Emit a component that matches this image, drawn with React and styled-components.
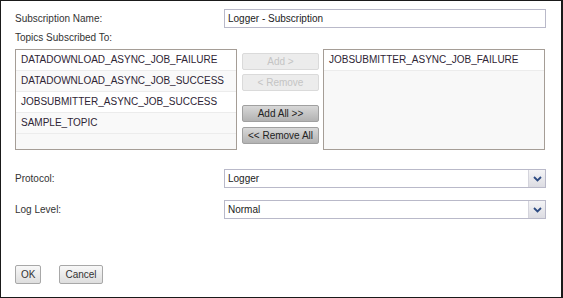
import React from 'react';
import styled, { createGlobalStyle } from 'styled-components';

const GlobalStyle = createGlobalStyle`
  html, body {
    margin: 0;
    padding: 0;
    background: #fff;
  }
  body {
    font-family: "Liberation Sans", Arial, sans-serif;
    font-size: 10px;
    color: #333;
  }
`;

const Frame = styled.div`
  box-sizing: border-box;
  width: 563px;
  height: 298px;
  border: 1px solid #1a1a1a;
  border-right-width: 2px;
  padding: 8px 0 0 14px;
  display: flex;
  flex-direction: column;
`;

const FieldRow = styled.div`
  display: flex;
  align-items: center;
  height: 19px;
  margin-top: ${props => props.$top || 0}px;
`;

const Label = styled.label`
  width: 209px;
  color: #333;
`;

const TextInput = styled.input`
  box-sizing: border-box;
  width: 322px;
  height: 19px;
  border: 1px solid #b9b9c9;
  padding: 0 3px;
  font: inherit;
  color: #222;
  outline: none;
`;

const SectionLabel = styled.div`
  margin-top: 4px;
  height: 12px;
  line-height: 12px;
`;

const Transfer = styled.div`
  display: flex;
  margin-top: 5px;
  height: 101px;
`;

const ListBox = styled.ul`
  box-sizing: border-box;
  width: 222px;
  height: 101px;
  margin: 0;
  padding: 0;
  list-style: none;
  border: 1px solid #a59d96;
  background: #f8f8f8;
  overflow: hidden;
`;

const ListItem = styled.li`
  height: 20px;
  line-height: 20px;
  padding-left: 5px;
  border-bottom: 1px solid #ececec;
  background: ${props => (props.$alt ? '#f9f9f9' : '#fff')};
  color: #2e2535;
  white-space: nowrap;
`;

const ButtonColumn = styled.div`
  width: 77px;
  margin: 0 4px 0 5px;
  padding-top: 4px;
  display: flex;
  flex-direction: column;
`;

const MoveButton = styled.button`
  box-sizing: border-box;
  width: 77px;
  height: 17px;
  padding: 0;
  margin-top: ${props => props.$gap || 0}px;
  border-radius: 2px;
  font: inherit;
  font-size: 10px;
  border: 1px solid ${props => (props.disabled ? '#dadada' : '#a0a0a0')};
  color: ${props => (props.disabled ? '#c4c4c4' : '#222')};
  background: ${props =>
    props.disabled ? '#ececec' : 'linear-gradient(#d8d8d8, #b2b2b2)'};
`;

const SelectBox = styled.div`
  box-sizing: border-box;
  width: 322px;
  height: 19px;
  border: 1px solid #b9b9c9;
  display: flex;
  align-items: stretch;
  color: #222;
`;

const SelectValue = styled.span`
  flex: 1;
  padding-left: 3px;
  line-height: 17px;
`;

const SelectArrow = styled.span`
  width: 16px;
  border-left: 1px solid #d4d4dc;
  background: linear-gradient(#f4f4f6, #dcdce2);
  display: flex;
  align-items: center;
  justify-content: center;
`;

const Actions = styled.div`
  display: flex;
  gap: 18px;
  margin-top: 46px;
`;

const ActionButton = styled.button`
  box-sizing: border-box;
  height: 19px;
  padding: 0 5px;
  border: 1px solid #a8a8a8;
  border-radius: 2px;
  background: linear-gradient(#f8f8f8, #dedede);
  font: inherit;
  font-size: 10px;
  color: #333;
`;

const Chevron = () => (
  <svg width="9" height="6" viewBox="0 0 9 6">
    <path d="M1 1 L4.5 4.5 L8 1" fill="none" stroke="#2d4b82" strokeWidth="1.8" />
  </svg>
);

const Select = ({ value }) => (
  <SelectBox>
    <SelectValue>{value}</SelectValue>
    <SelectArrow>
      <Chevron />
    </SelectArrow>
  </SelectBox>
);

const available = [
  'DATADOWNLOAD_ASYNC_JOB_FAILURE',
  'DATADOWNLOAD_ASYNC_JOB_SUCCESS',
  'JOBSUBMITTER_ASYNC_JOB_SUCCESS',
  'SAMPLE_TOPIC',
];

const selected = ['JOBSUBMITTER_ASYNC_JOB_FAILURE'];

const App = () => (
  <>
    <GlobalStyle />
    <Frame>
      <FieldRow>
        <Label>Subscription Name:</Label>
        <TextInput defaultValue="Logger - Subscription" />
      </FieldRow>
      <SectionLabel>Topics Subscribed To:</SectionLabel>
      <Transfer>
        <ListBox>
          {available.map((topic, i) => (
            <ListItem key={topic} $alt={i % 2 === 1}>
              {topic}
            </ListItem>
          ))}
        </ListBox>
        <ButtonColumn>
          <MoveButton disabled>Add &gt;</MoveButton>
          <MoveButton disabled $gap={4}>&lt; Remove</MoveButton>
          <MoveButton $gap={14}>Add All &gt;&gt;</MoveButton>
          <MoveButton $gap={5}>&lt;&lt; Remove All</MoveButton>
        </ButtonColumn>
        <ListBox>
          {selected.map(topic => (
            <ListItem key={topic}>{topic}</ListItem>
          ))}
        </ListBox>
      </Transfer>
      <FieldRow $top={19}>
        <Label>Protocol:</Label>
        <Select value="Logger" />
      </FieldRow>
      <FieldRow $top={12}>
        <Label>Log Level:</Label>
        <Select value="Normal" />
      </FieldRow>
      <Actions>
        <ActionButton>OK</ActionButton>
        <ActionButton>Cancel</ActionButton>
      </Actions>
    </Frame>
  </>
);

export default App;
